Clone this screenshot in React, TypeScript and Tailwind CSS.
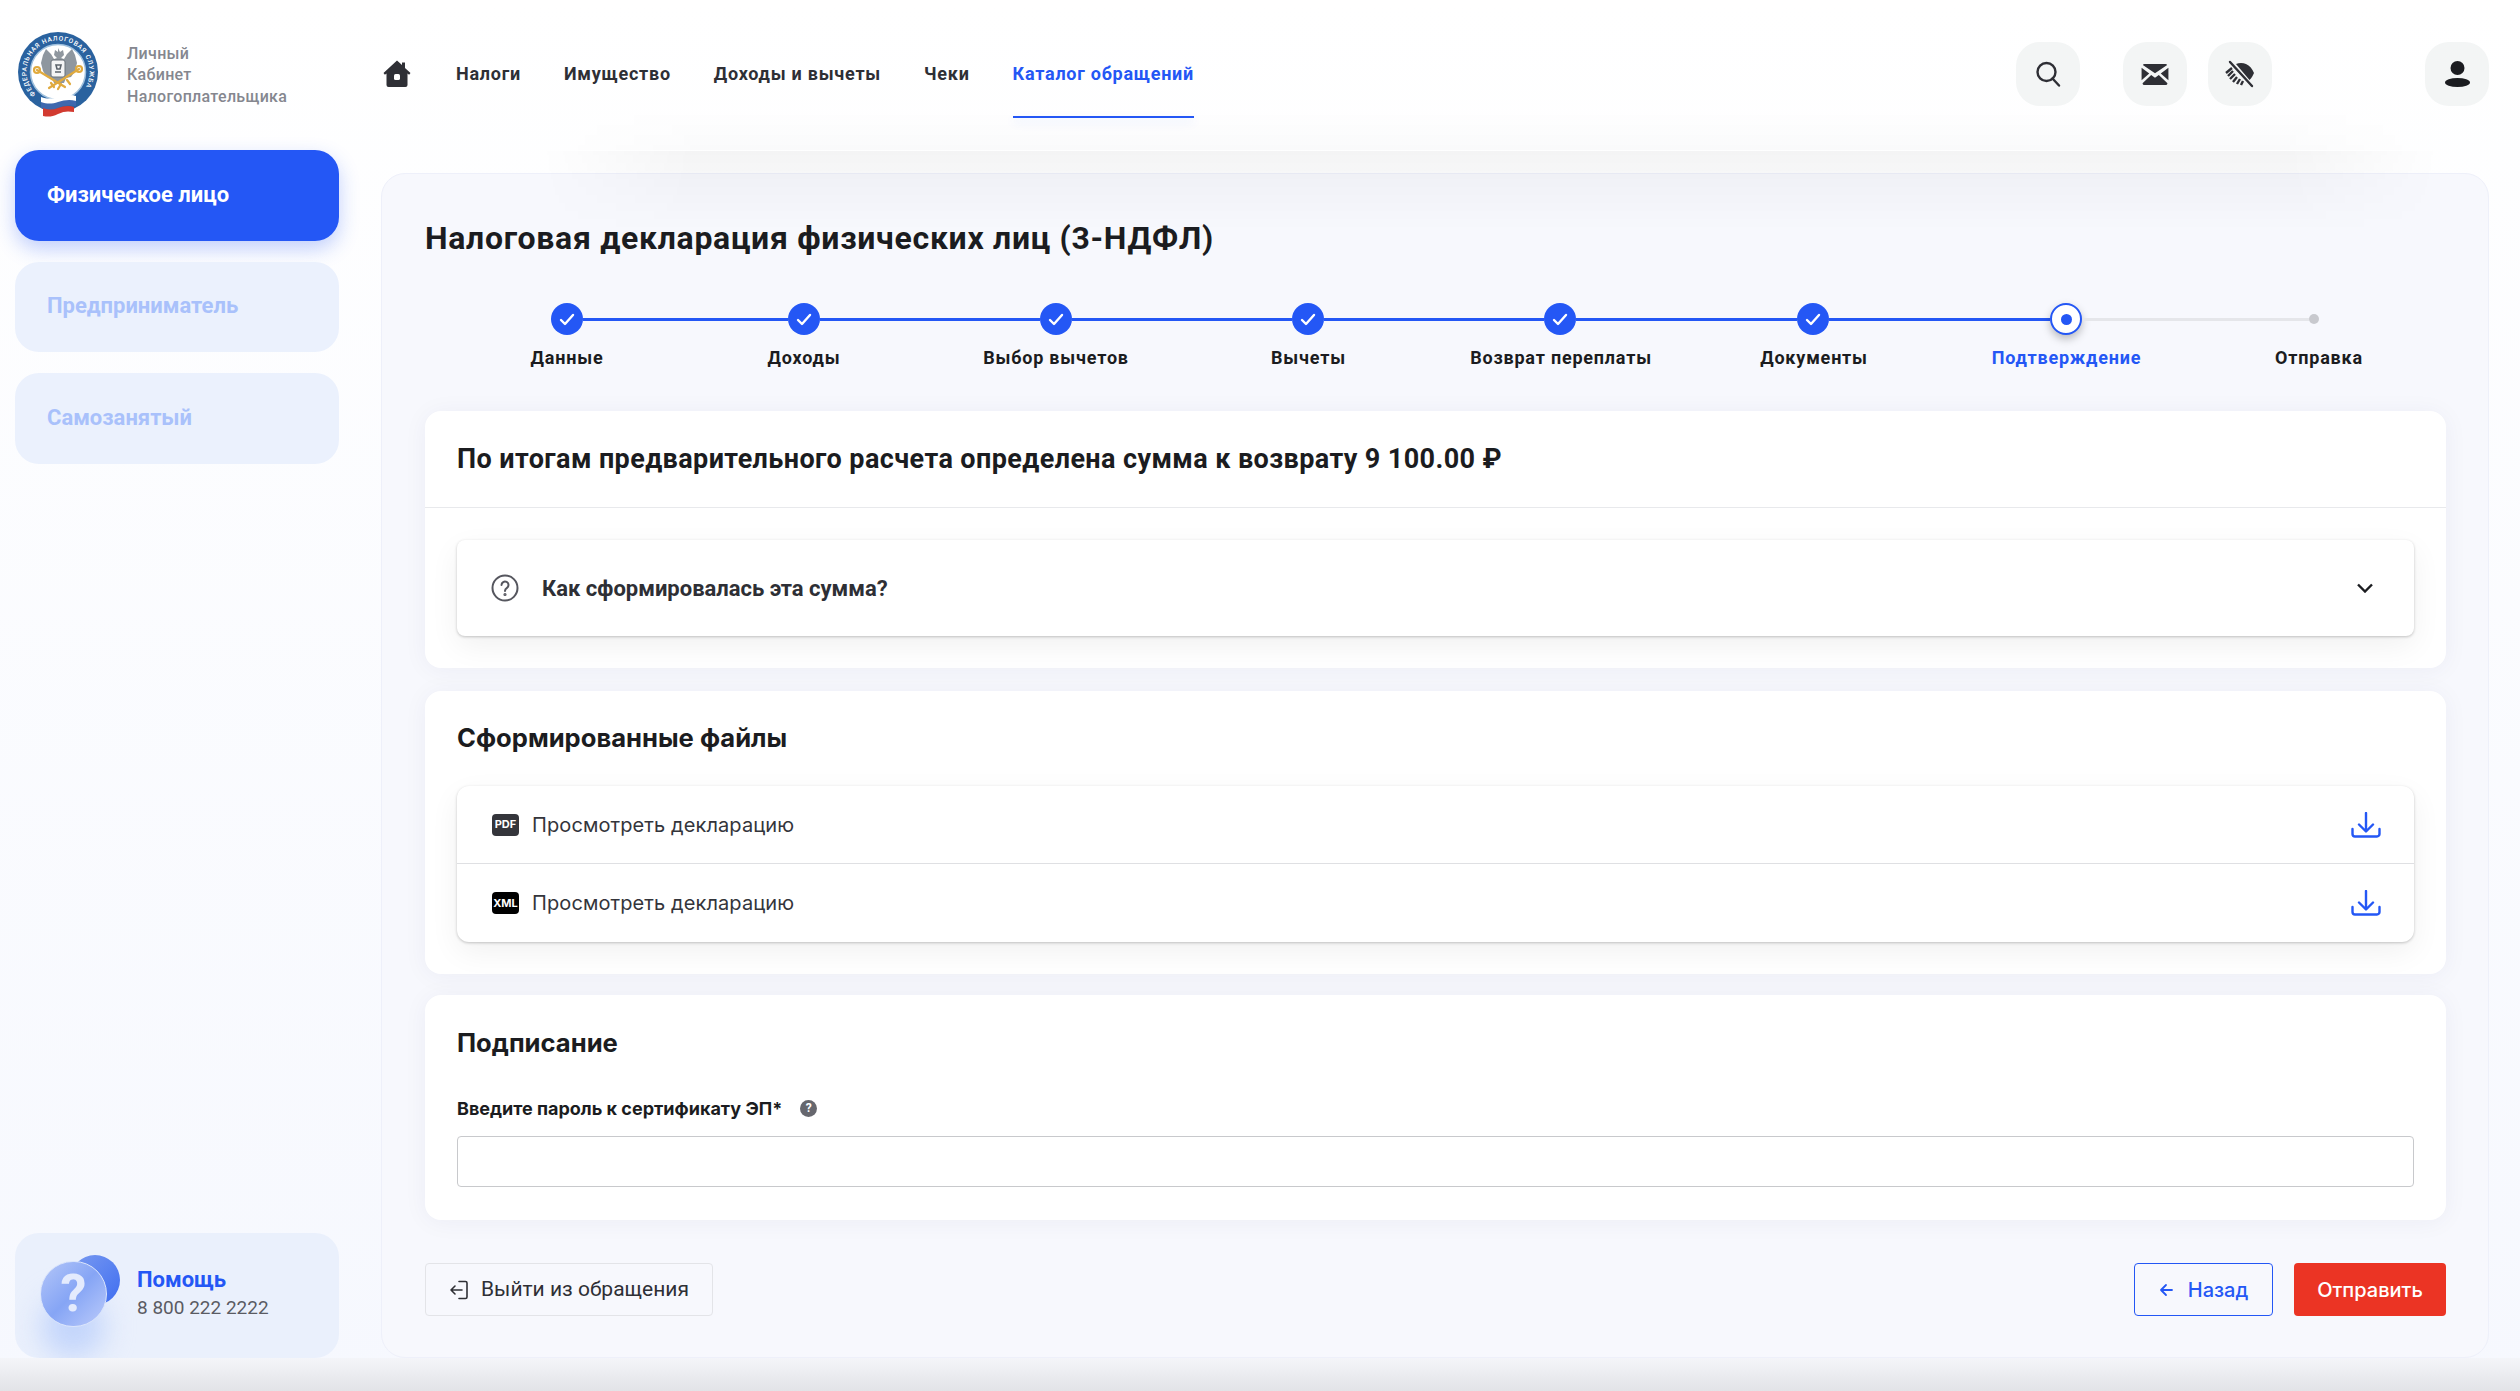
import React from "react";

const ink = "text-[#1b1c20]";

function Logo() {
  return (
    <svg width="82" height="86" viewBox="0 0 82 86" className="shrink-0">
      <defs>
        <path id="ringText" d="M 18.7 63.3 A 31.5 31.5 0 1 1 63.3 63.3" fill="none" />
      </defs>
      <circle cx="41" cy="41" r="40" fill="#2a629f" />
      <circle cx="41" cy="41" r="27.5" fill="#ffffff" stroke="#9fc0dd" strokeWidth="1.5" />
      <text fontSize="6.5" fontWeight="500" fill="#ffffff" fontFamily="Roboto, sans-serif" letterSpacing="0.8">
        <textPath href="#ringText">ФЕДЕРАЛЬНАЯ НАЛОГОВАЯ СЛУЖБА</textPath>
      </text>
      <path d="M41 17l2 4 3-2 1 5-3 3 3 1 3-5 5-5 3 6 2 8-2 8-4 6-5 1-2 5h-10l-2-5-5-1-4-6-2-8 2-8 3-6 5 5 3 5 3-1-3-3 1-5 3 2z" fill="#8f979f" />
      <rect x="34" y="29" width="14" height="17" rx="2" fill="#f4f5f6" stroke="#6b737b" />
      <path d="M39 34h5l-1 4h-3zM38 41h6" stroke="#5c646c" strokeWidth="1.6" fill="none" />
      <g stroke="#e0aa3e" strokeWidth="2.2" fill="none" strokeLinecap="round">
        <path d="M20 39l28 17M62 38L32 57" />
        <circle cx="20" cy="39" r="3" />
        <circle cx="62" cy="38" r="3" />
        <path d="M44 53l-3 5M50 49l3 4M34 52l3 4" />
      </g>
      <path d="M24 66c6 2 11 2 17 0s12-3 18-1v6c-6-1-12-1-18 2s-11 2-17 0z" fill="#ffffff" />
      <path d="M24 71c6 2 11 2 17 0s12-3 18-1v5c-6-1-12-1-18 2s-11 2-17 0z" fill="#3e68ae" />
      <path d="M26 77c5 2 10 2 15 0s11-3 16-1v5c-6-1-10-1-16 2s-10 3-15 2z" fill="#d23a30" />
    </svg>
  );
}

function HomeIcon() {
  return (
    <svg width="28" height="28" viewBox="0 0 28 28" className="shrink-0">
      <path fill="#2e2f35" d="M14 0.5l5 4.6V2.5h3v5.4l5.5 5.1-1.400 1.800-1.600-1.300V25a2 2 0 0 1-2 2H5.500a2 2 0 0 1-2-2V13.500L1.900 14.800.5 13z" />
      <rect x="11" y="14" width="6" height="6" rx="1.600" fill="#ffffff" />
    </svg>
  );
}

function NavLink({ children, active }: { children: React.ReactNode; active?: boolean }) {
  return (
    <a className={`relative text-[18px] leading-[24px] font-bold tracking-[0.75px] ${active ? "text-[#2457f5]" : "text-[#2e2f35]"}`}>
      {children}
      {active && <span className="absolute left-0 right-0 top-[54px] h-[2px] bg-[#2457f5] shadow-[0_4px_10px_rgba(36,87,245,0.15)]" />}
    </a>
  );
}

function IconBox({ children, className = "" }: { children: React.ReactNode; className?: string }) {
  return (
    <button className={`w-[64px] h-[64px] rounded-[24px] bg-[#f3f5f5] flex items-center justify-center ${className}`}>
      {children}
    </button>
  );
}

function Header() {
  return (
    <header className="h-[150px] flex items-center relative z-10 pr-[31px] pb-[2px]">
      <div className="w-[383px] shrink-0 flex items-center pl-[17px]">
        <Logo />
        <div className="ml-[28px] text-[16px] leading-[21.5px] font-medium tracking-[0.3px] text-[#85878f] mt-[2px]">
          <div>Личный</div>
          <div>Кабинет</div>
          <div>Налогоплательщика</div>
        </div>
      </div>
      <nav className="flex items-center gap-[43px]">
        <div className="mr-[2px]"><HomeIcon /></div>
        <NavLink>Налоги</NavLink>
        <NavLink>Имущество</NavLink>
        <NavLink>Доходы и вычеты</NavLink>
        <NavLink>Чеки</NavLink>
        <NavLink active>Каталог обращений</NavLink>
      </nav>
      <div className="ml-auto flex items-center">
        <IconBox>
          <svg width="26" height="26" viewBox="0 0 26 26" fill="none" stroke="#2e2f35" strokeWidth="2.4">
            <ellipse cx="11.5" cy="11" rx="9" ry="9" />
            <path d="M17.5 17.5l6.500 7" strokeLinecap="round" />
          </svg>
        </IconBox>
        <IconBox className="ml-[43px]">
          <svg width="28" height="23" viewBox="0 0 28 24">
            <path fill="#2e2f35" d="M3 1h22a2 2 0 0 1 1.700 1L14 10.600 1.300 2A2 2 0 0 1 3 1zM0 5l8 6-8 7zM28 5l-8 6 8 7zM10 12.600l4 2.900 4-2.900L27 21a2 2 0 0 1-2 2H3a2 2 0 0 1-2-2z" />
          </svg>
        </IconBox>
        <IconBox className="ml-[21px]">
          <svg width="32" height="28" viewBox="0 0 32 28" fill="none">
            <path fill="#2e2f35" d="M12 4c3-1.500 7-1.500 10 0 3.500 1.600 6.500 5 8 9-1 2.500-2.500 5-4.500 7L12 4z" />
            <path d="M6 2l22 24" stroke="#2e2f35" strokeWidth="2.4" strokeLinecap="round" />
            <path d="M8 8L2 13M9 11l-5 5M11 14l-5 5M13 17l-4 5M16 19l-3 5M19 21l-2 4" stroke="#2e2f35" strokeWidth="2.4" />
          </svg>
        </IconBox>
        <IconBox className="ml-[153px]">
          <svg width="25" height="26" viewBox="0 0 25 26">
            <ellipse cx="12.500" cy="7" rx="7" ry="7" fill="#1b1c20" />
            <ellipse cx="12.500" cy="21.500" rx="12.500" ry="4.500" fill="#1b1c20" />
          </svg>
        </IconBox>
      </div>
    </header>
  );
}

function SideItem({ children, active }: { children: React.ReactNode; active?: boolean }) {
  return active ? (
    <div className="h-[90.5px] rounded-[24px] bg-[#2457f5] shadow-[0_8px_20px_rgba(36,87,245,0.28)] flex items-center pl-[32px] text-[22px] font-bold text-white pb-[2px]">
      {children}
    </div>
  ) : (
    <div className="h-[90.5px] rounded-[24px] bg-[#ebf1fd] flex items-center pl-[32px] text-[22px] font-bold text-[#a9c1fb] pb-[2px]">
      {children}
    </div>
  );
}

function HelpArt() {
  return (
    <div className="relative w-[84px] h-[92px] shrink-0">
      <div className="absolute left-[2px] top-[42px] w-[64px] h-[60px] rounded-full bg-[#c3d5fb] blur-[14px]" />
      <div className="absolute left-[31px] top-0 w-[50px] h-[50px] rounded-full bg-gradient-to-br from-[#7a9af0] to-[#3f6cf0]" />
      <div className="absolute left-[1px] top-[6px] w-[67px] h-[66px] rounded-full border border-[#dbe5fb] bg-gradient-to-br from-[#b4c6f8] via-[#86a5f5] to-[#bccbfa] flex items-center justify-center text-[52px] leading-none font-bold text-[#e4ebfd]">
        ?
      </div>
    </div>
  );
}

function Sidebar() {
  return (
    <aside className="flex-1 flex flex-col pl-[15px] pr-[42px]">
      <div className="flex flex-col gap-[21px]">
        <SideItem active>Физическое лицо</SideItem>
        <SideItem>Предприниматель</SideItem>
        <SideItem>Самозанятый</SideItem>
      </div>
      <div className="mt-auto h-[125px] rounded-[24px] bg-[#eaf0fc] flex items-start pl-[24px] pt-[22px] overflow-hidden">
        <HelpArt />
        <div className="ml-[14px] pt-[11px]">
          <div className="text-[22px] leading-[28px] font-bold text-[#2457f5]">Помощь</div>
          <div className="text-[19px] leading-[28px] text-[#5a5b63]">8 800 222 2222</div>
        </div>
      </div>
    </aside>
  );
}

function CheckStep() {
  return (
    <div className="w-[32px] h-[32px] rounded-full bg-[#2457f5] flex items-center justify-center shrink-0">
      <svg width="16" height="13" viewBox="0 0 16 13" fill="none" stroke="#ffffff" strokeWidth="2.400" strokeLinecap="round" strokeLinejoin="round">
        <path d="M2 7l4 4 8-9" />
      </svg>
    </div>
  );
}

function Line({ w }: { w: string }) {
  return <div className={`h-[3px] bg-[#2457f5] ${w}`} />;
}

const labels: { t: string; w: string; active?: boolean }[] = [
  { t: "Данные", w: "w-[226px]" },
  { t: "Доходы", w: "w-[248px]" },
  { t: "Выбор вычетов", w: "w-[256px]" },
  { t: "Вычеты", w: "w-[249px]" },
  { t: "Возврат переплаты", w: "w-[256px]" },
  { t: "Документы", w: "w-[250px]" },
  { t: "Подтверждение", w: "w-[255px]", active: true },
  { t: "Отправка", w: "w-[250px]" },
];

function Stepper() {
  return (
    <div className="mt-[45px]">
      <div className="flex items-center ml-[126px]">
        <CheckStep /><Line w="w-[205px]" />
        <CheckStep /><Line w="w-[220px]" />
        <CheckStep /><Line w="w-[220px]" />
        <CheckStep /><Line w="w-[220px]" />
        <CheckStep /><Line w="w-[221px]" />
        <CheckStep /><Line w="w-[221px]" />
        <div className="w-[32px] h-[32px] rounded-full bg-white border-[2px] border-[#2457f5] shadow-[0_4px_8px_rgba(0,0,0,0.25)] flex items-center justify-center shrink-0">
          <div className="w-[11px] h-[11px] rounded-full bg-[#2457f5]" />
        </div>
        <div className="ml-[1px] w-[226px] h-[3px] bg-[#e5e6ea]" />
        <div className="w-[10px] h-[10px] rounded-full bg-[#c8c9ce]" />
      </div>
      <div className="flex ml-[29px] mt-[11px]">
        {labels.map((l) => (
          <div
            key={l.t}
            className={`${l.w} text-center text-[18px] leading-[24px] font-bold tracking-[0.8px] ${l.active ? "text-[#2457f5]" : ink}`}
          >
            {l.t}
          </div>
        ))}
      </div>
    </div>
  );
}

function Download() {
  return (
    <svg width="30" height="26" viewBox="0 0 30 26" fill="none" stroke="#2457f5" strokeWidth="2.400" strokeLinecap="round" strokeLinejoin="round">
      <path d="M15 1v18M8 12.500l7 7 7-7" />
      <path d="M1.500 17v5a2.500 2.500 0 0 0 2.500 2.500h22a2.500 2.500 0 0 0 2.500-2.500v-5" />
    </svg>
  );
}

function FileRow({ tag, bg, last }: { tag: string; bg: string; last?: boolean }) {
  return (
    <div className={`h-[78px] flex items-center pl-[35px] pr-[33px] ${last ? "" : "border-b border-[#dfe0e3]"}`}>
      <div className={`w-[27px] h-[22px] rounded-[4px] ${bg} flex items-center justify-center text-[11px] font-bold text-white leading-none font-['Inter',sans-serif]`}>
        {tag}
      </div>
      <div className="ml-[13px] text-[20px] tracking-[0.1px] text-[#34353b] font-['Inter',sans-serif]">Просмотреть декларацию</div>
      <div className="ml-auto"><Download /></div>
    </div>
  );
}

const card = "bg-white rounded-[16px] shadow-[0_2px_24px_rgba(30,40,90,0.05)]";
const inner = "bg-white shadow-[0_1px_3px_rgba(0,0,0,0.22),0_10px_30px_rgba(0,0,0,0.06)]";

function Main() {
  return (
    <main className="flex-1 min-w-0 mr-[31px] rounded-[24px] border border-[#eef0fa] bg-[#f7f8fd] pl-[43px] pr-[42px] pt-[44px] flex flex-col relative">
      <h1 className={`text-[32px] leading-[40px] font-bold ${ink} tracking-[0.7px]`}>
        Налоговая декларация физических лиц (3-НДФЛ)
      </h1>
      <Stepper />

      <section className={`${card} mt-[41px] h-[257px]`}>
        <div className={`h-[97px] flex items-center pl-[32px] border-b border-[#e8e9ec] text-[27px] font-bold ${ink} tracking-[0.4px]`}>
          По итогам предварительного расчета определена сумма к возврату 9 100.00 ₽
        </div>
        <div className={`${inner} rounded-[8px] mx-[32px] mt-[32px] h-[96px] flex items-center pl-[34px] pr-[41px]`}>
          <svg width="28" height="28" viewBox="0 0 28 28" fill="none" stroke="#55565e" strokeWidth="2">
            <circle cx="14" cy="14" r="12.500" />
            <path d="M10.500 11a3.500 3.500 0 1 1 5.500 2.900c-1.300.9-2 1.500-2 3.100" strokeLinecap="round" />
            <circle cx="14" cy="20.500" r="0.600" fill="#55565e" />
          </svg>
          <span className="ml-[23px] text-[22px] font-bold text-[#2e2f35]">Как сформировалась эта сумма?</span>
          <svg className="ml-auto" width="16" height="10" viewBox="0 0 16 10" fill="none" stroke="#1b1c20" strokeWidth="2.400">
            <path d="M1 1.500l7 7 7-7" />
          </svg>
        </div>
      </section>

      <section className={`${card} mt-[23px] h-[283px] px-[32px] pt-[27px]`}>
        <h2 className={`text-[25.6px] leading-[40px] font-bold ${ink} font-['Inter',sans-serif]`}>Сформированные файлы</h2>
        <div className={`${inner} rounded-[12px] mt-[28px]`}>
          <FileRow tag="PDF" bg="bg-[#34353b]" />
          <FileRow tag="XML" bg="bg-black" last />
        </div>
      </section>

      <section className={`${card} mt-[21px] h-[225px] px-[32px] pt-[28px]`}>
        <h2 className={`text-[25.6px] leading-[40px] font-bold ${ink} font-['Inter',sans-serif]`}>Подписание</h2>
        <div className="flex items-center mt-[33px] h-[24px]">
          <span className={`text-[18px] font-bold ${ink} font-['Inter',sans-serif]`}>Введите пароль к сертификату ЭП*</span>
          <span className="ml-[18px] w-[17px] h-[17px] rounded-full bg-[#66676e] flex items-center justify-center text-[12px] font-bold text-white leading-none">?</span>
        </div>
        <input className="mt-[16px] w-full h-[51px] rounded-[4px] border border-[#c8c9cc] bg-white outline-none" />
      </section>

      <div className="mt-[43px] flex items-center">
        <button className="w-[288px] h-[53px] rounded-[4px] border border-[#e3e4e8] flex items-center justify-center text-[21px] text-[#2e2f35]">
          <svg width="20" height="20" viewBox="0 0 20 20" fill="none" stroke="#2e2f35" strokeWidth="1.600" strokeLinecap="round" strokeLinejoin="round">
            <path d="M10 1.500h6.500a1.500 1.500 0 0 1 1.500 1.500v14a1.500 1.500 0 0 1-1.500 1.500H10M13 10H2M6 6l-4 4 4 4" />
          </svg>
          <span className="ml-[12px]">Выйти из обращения</span>
        </button>
        <button className="ml-auto w-[139px] h-[53px] rounded-[4px] border border-[#2457f5] flex items-center justify-center text-[20px] font-medium text-[#2457f5] font-['Inter',sans-serif]">
          <svg width="14" height="14" viewBox="0 0 14 14" fill="none" stroke="#2457f5" strokeWidth="1.800" strokeLinecap="round" strokeLinejoin="round">
            <path d="M13 7H2M7 2L2 7l5 5" />
          </svg>
          <span className="ml-[15px]">Назад</span>
        </button>
        <button className="ml-[21px] w-[152px] h-[53px] rounded-[4px] bg-[#eb3424] text-[20px] font-medium text-white font-['Inter',sans-serif]">
          Отправить
        </button>
      </div>
    </main>
  );
}

export default function App() {
  return (
    <div className="relative w-[2520px] h-[1391px] overflow-hidden flex flex-col bg-gradient-to-b from-white to-[#f6f8fe] font-['Roboto',sans-serif]">
      <Header />
      <div className="flex h-[1208px]">
        <div className="flex flex-col w-[381px] shrink-0"><Sidebar /></div>
        <div className="flex-1 min-w-0 flex flex-col pt-[23px]"><Main /></div>
      </div>
      <div className="h-[33px] bg-gradient-to-b from-[#f4f5f9] to-[#e2e3e7]" />
      <div className="absolute left-[560px] top-[110px] w-[1860px] h-[40px] pointer-events-none bg-gradient-to-b from-transparent to-[rgba(0,0,0,0.015)] [mask-image:linear-gradient(to_right,transparent,black_8%,black_92%,transparent)]" />
      <div className="absolute left-[540px] top-[151px] w-[1900px] h-[80px] pointer-events-none bg-gradient-to-b from-[rgba(0,0,0,0.04)] to-transparent [mask-image:linear-gradient(to_right,transparent,black_8%,black_92%,transparent)]" />
    </div>
  );
}
